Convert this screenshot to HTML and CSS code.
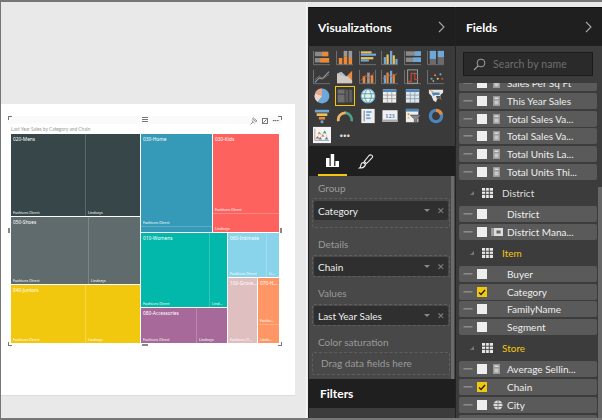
FILE: index.html
```html
<!DOCTYPE html>
<html lang="en">
<head>
<meta charset="utf-8">
<title>Power BI treemap</title>
<link rel="stylesheet" href="styles.css">
</head>
<body>
<svg class="defs" width="0" height="0">
  <defs>
    <g id="grip"><rect x="0" y="0" width="9" height="1.6" fill="#8a8a8a"/></g>
    <g id="calc"><rect x="0" y="0" width="7" height="10" fill="#9a9a9a"/><rect x="1.5" y="1.5" width="4" height="1.5" fill="#ddd"/><rect x="1.5" y="4.5" width="4" height="4" fill="#c8c8c8"/></g>
    <g id="tbl"><rect width="11" height="10" fill="#e8e8e8"/><path d="M0 3.2h11M0 6.4h11M3.6 0v10M7.3 0v10" stroke="#4a4a4a" stroke-width="1"/></g>
    <g id="frame"><path d="M.5 1v15.5H19" fill="none" stroke="#777"/></g>
  </defs>
</svg>
<main class="app">
  <section class="canvas">
    <div class="page">
      <div class="visual">
        <span class="handle tl"></span><span class="handle tr"></span><span class="handle bl"></span><span class="handle br"></span>
        <span class="mid mid-t"></span><span class="mid mid-b"></span><span class="mid mid-l"></span><span class="mid mid-r"></span>
        <div class="vis-tools">
          <svg width="8" height="8" viewBox="0 0 8 8"><path d="M.5 7.500l2.500-2.500M3.500 1l3.500 3-1.200.7-3.300-2.800zM1.800 3.500L4.500 6.200" fill="none" stroke="#777" stroke-width=".8"/></svg>
          <svg width="6" height="6" viewBox="0 0 6 6"><rect x=".5" y=".5" width="5" height="5" fill="none" stroke="#777"/><path d="M1.500 4.500l3-3" stroke="#777"/></svg>
          <span class="dots3">···</span>
        </div>
        <div class="vis-title">Last Year Sales by Category and Chain</div>
        <div class="treemap">
          <div class="tm-col col-a">
            <div class="cell men row-men">
              <b class="cat">020-Mens</b>
              <div class="leaves"><div class="leaf" style="width:74px">Fashions Direct</div><div class="leaf grow">Lindseys</div></div>
            </div>
            <div class="cell shoes row-shoes">
              <b class="cat">050-Shoes</b>
              <div class="leaves"><div class="leaf" style="width:77px">Fashions Direct</div><div class="leaf grow">Lindseys</div></div>
            </div>
            <div class="cell juniors row-juniors">
              <b class="cat">040-Juniors</b>
              <div class="leaves"><div class="leaf" style="width:74px">Fashions Direct</div><div class="leaf grow">Lindseys</div></div>
            </div>
          </div>
          <div class="tm-col col-b">
            <div class="tm-row row-top">
              <div class="cell home" style="width:71px">
                <b class="cat">030-Home</b>
                <div class="stack"><div class="leaf grow">Fashions Direct</div><div class="leaf thin"></div></div>
              </div>
              <div class="cell kids grow">
                <b class="cat">030-Kids</b>
                <div class="stack"><div class="leaf grow">Fashions Direct</div><div class="leaf kids-low">Lindseys</div></div>
              </div>
            </div>
            <div class="tm-row row-low">
              <div class="tm-col" style="width:86px">
                <div class="cell womens row-womens">
                  <b class="cat">010-Womens</b>
                  <div class="leaves"><div class="leaf" style="width:68px">Fashions Direct</div><div class="leaf grow">Lind...</div></div>
                </div>
                <div class="cell acc grow">
                  <b class="cat">080-Accessories</b>
                  <div class="leaves"><div class="leaf" style="width:55px">Fashions Direct</div><div class="leaf grow">Lindseys</div></div>
                </div>
              </div>
              <div class="tm-col grow">
                <div class="cell intimate row-intimate">
                  <b class="cat">060-Intimate</b>
                  <div class="leaves"><div class="leaf" style="width:38px">Fashions Direct</div><div class="leaf grow">Li...</div></div>
                </div>
                <div class="tm-row grow">
                  <div class="cell grocery" style="width:29px">
                    <b class="cat">100-Groce...</b>
                    <div class="stack"><div class="leaf grow">Fashions D...</div></div>
                  </div>
                  <div class="cell hosiery grow">
                    <b class="cat">070-H...</b>
                    <div class="stack"><div class="leaf grow">Fashio...</div><div class="leaf hos-low">Linds...</div></div>
                  </div>
                </div>
              </div>
            </div>
          </div>
        </div>
      </div>
    </div>
  </section>

  <aside class="panel viz">
    <header class="panel-head"><h2>Visualizations</h2><svg class="chev" width="7" height="12" viewBox="0 0 7 12"><path d="M1 1l5 5-5 5" fill="none" stroke="#a8a8a8" stroke-width="1.1"/></svg></header>
    <div class="gallery">
      <svg viewBox="0 0 20 18"><use href="#frame"/><rect x="2" y="2" width="15" height="5" fill="#8a8a8a"/><rect x="2" y="9" width="16" height="5" fill="#8a8a8a"/><rect x="10" y="2" width="7" height="5" fill="#e98a3a"/><rect x="8" y="9" width="10" height="5" fill="#e98a3a"/></svg>
      <svg viewBox="0 0 20 18"><use href="#frame"/><rect x="3" y="9" width="4" height="7" fill="#e98a3a"/><rect x="8.500" y="1" width="4" height="6" fill="#999"/><rect x="8.500" y="7" width="4" height="9" fill="#e98a3a"/><rect x="14" y="1" width="4" height="8" fill="#999"/><rect x="14" y="9" width="4" height="7" fill="#e98a3a"/></svg>
      <svg viewBox="0 0 20 18"><use href="#frame"/><rect x="2" y="1.500" width="12" height="2.500" fill="#ecc15a"/><rect x="2" y="4" width="17" height="2.500" fill="#6ea8d8"/><rect x="2" y="8" width="14" height="2.500" fill="#ecc15a"/><rect x="2" y="10.500" width="9" height="2.500" fill="#6ea8d8"/></svg>
      <svg viewBox="0 0 20 18"><use href="#frame"/><rect x="3" y="8" width="2.500" height="8" fill="#6ea8d8"/><rect x="6" y="5" width="2.500" height="11" fill="#ecc15a"/><rect x="10" y="1" width="2.500" height="15" fill="#6ea8d8"/><rect x="13" y="6" width="2.500" height="10" fill="#ecc15a"/><rect x="16" y="10" width="2.500" height="6" fill="#6ea8d8"/></svg>
      <svg viewBox="0 0 20 18"><use href="#frame"/><rect x="2" y="1.500" width="17" height="5" fill="#8a8a8a"/><rect x="12" y="1.500" width="7" height="5" fill="#6ea8d8"/><rect x="2" y="8.500" width="17" height="5" fill="#8a8a8a"/><rect x="10" y="8.500" width="9" height="5" fill="#6ea8d8"/></svg>
      <svg viewBox="0 0 20 18"><use href="#frame"/><rect x="3" y="1" width="7" height="15" fill="#6b6b6b"/><rect x="3" y="1" width="7" height="9" fill="#6ea8d8"/><rect x="12" y="1" width="7" height="15" fill="#6b6b6b"/><rect x="12" y="1" width="7" height="7" fill="#6ea8d8"/></svg>

      <svg viewBox="0 0 20 18"><use href="#frame"/><path d="M2 15l5-5 3 1 8-8" fill="none" stroke="#6ea8d8" stroke-width="1.200"/><path d="M2 12l5-4 4 3 7-5" fill="none" stroke="#b06a3a" stroke-width="1"/></svg>
      <svg viewBox="0 0 20 18"><path d="M1 6l5 1 5 2 7-7v14H1z" fill="#e98a3a"/><path d="M1 5l5-2 5 5 3 1 4 4v3H1z" fill="#c9d3da" opacity=".85"/></svg>
      <svg viewBox="0 0 20 18"><use href="#frame"/><path d="M18.500 1v15" stroke="#777"/><rect x="4" y="8" width="3" height="8" fill="#e98a3a"/><rect x="9" y="4" width="3" height="12" fill="#999"/><rect x="13" y="7" width="3" height="9" fill="#e98a3a"/><path d="M2 13l5-6 4 3 6-6" fill="none" stroke="#c9563a"/></svg>
      <svg viewBox="0 0 20 18"><use href="#frame"/><rect x="3" y="7" width="2.500" height="9" fill="#6ea8d8"/><rect x="6" y="4" width="2.500" height="12" fill="#e98a3a"/><rect x="10" y="2" width="2.500" height="14" fill="#6ea8d8"/><rect x="13" y="6" width="2.500" height="10" fill="#e98a3a"/><path d="M2 11l6-4 5 2 5-4" fill="none" stroke="#d9603a"/></svg>
      <svg viewBox="0 0 20 18"><use href="#frame"/><rect x="4" y="1" width="11" height="15" fill="none" stroke="#aaa"/><path d="M4 14h4V5h4v7h4" fill="none" stroke="#c9432f" stroke-width="1.400"/><path d="M12 5h3" stroke="#3d9a7a"/></svg>
      <svg viewBox="0 0 20 18"><use href="#frame"/><g><circle cx="5" cy="11" r="1.200" fill="#6ea8d8"/><circle cx="9" cy="7" r="1.200" fill="#e98a3a"/><circle cx="12" cy="11" r="1.200" fill="#ecc15a"/><circle cx="15" cy="6" r="1.200" fill="#6ea8d8"/><circle cx="17" cy="11" r="1.200" fill="#c9563a"/><circle cx="7" cy="13.500" r="1" fill="#aaa"/></g></svg>

      <svg viewBox="0 0 20 18"><circle cx="10" cy="9" r="8.300" fill="#6ea8d8"/><path d="M10 9V.7A8.300 8.300 0 0 0 2.200 6.200z" fill="#e9a48a"/><path d="M10 9L2.200 6.200A8.300 8.300 0 0 0 5 15.600z" fill="#f0d5c6"/></svg>
      <svg class="selected" viewBox="0 0 20 18"><rect x="2" y="2" width="16" height="14" fill="#5e5e5e"/><rect x="2" y="2" width="8" height="14" fill="#6e6e6e"/><path d="M2 7h8M10 2v14M14 2v14" stroke="#3c3c3c"/></svg>
      <svg viewBox="0 0 20 18"><circle cx="10" cy="9" r="7.800" fill="#e8eef2" stroke="#6ea8d8" stroke-width="1.200"/><path d="M2.500 6.500h15M2.500 11.500h15M10 1c-5 4-5 12 0 16M10 1c5 4 5 12 0 16" fill="none" stroke="#3f9a8a" stroke-width=".9"/></svg>
      <svg viewBox="0 0 20 18"><rect x="2" y="1.500" width="15" height="15" fill="#eee"/><rect x="2" y="1.500" width="15" height="3" fill="#4b84b8"/><path d="M2 8h15M2 12h15M7 4v13M12 4v13" stroke="#999" stroke-width=".9"/></svg>
      <svg viewBox="0 0 20 18"><rect x="2" y="1.500" width="15" height="15" fill="#dfe6ec"/><rect x="2" y="1.500" width="15" height="3" fill="#4b84b8"/><path d="M2 8h15M2 12h15M7 4v13M12 4v13" stroke="#8a9aa8" stroke-width=".9"/></svg>
      <svg viewBox="0 0 20 18"><path d="M2 2h16v3l-3 3v3l-4 2-1 3-3-2-2-5-3-3z" fill="#e8e8e8"/><path d="M5 5h9v3H9L7 9z" fill="#4b84b8"/><path d="M10 9h5v3h-4z" fill="#555"/><path d="M3 3l4 1M14 11l2 2" stroke="#e98a3a"/></svg>

      <svg viewBox="0 0 20 18"><rect x="2" y="2" width="16" height="3" fill="#6ea8d8"/><rect x="4" y="6" width="12" height="3" fill="#ecc15a"/><rect x="6.500" y="10" width="7" height="3" fill="#e98a3a"/><rect x="8.500" y="14" width="3" height="3" fill="#6ea8d8"/></svg>
      <svg viewBox="0 0 20 18"><path d="M2.500 15A8 8 0 0 1 11 5.500" fill="none" stroke="#e9b46a" stroke-width="3"/><path d="M11 5.500A8 8 0 0 1 17.500 15" fill="none" stroke="#4f9f8c" stroke-width="3"/></svg>
      <svg viewBox="0 0 20 18"><rect x="2.500" y="1" width="15" height="16" fill="#efefef"/><rect x="5" y="3" width="1.500" height="12" fill="#999"/><rect x="8" y="3.500" width="6" height="2" fill="#6ea8d8"/><rect x="8" y="7" width="4" height="2" fill="#6ea8d8"/><rect x="8" y="10.500" width="5" height="2" fill="#6ea8d8"/></svg>
      <svg viewBox="0 0 20 18"><rect x="1.500" y="2.500" width="17" height="13" fill="#f0f0f0"/><rect x="1.500" y="13" width="17" height="2.500" fill="#aaa"/><text x="10" y="11.200" text-anchor="middle" class="num">123</text></svg>
      <svg viewBox="0 0 20 18"><rect x="2" y="1" width="14" height="15" fill="#efefef"/><rect x="2" y="1" width="14" height="3" fill="#4b84b8"/><rect x="4" y="6" width="2" height="2" fill="#e98a3a"/><rect x="4" y="10" width="2" height="2" fill="#ecc15a"/><path d="M7 8h12l-4.500 4.500V17l-3-1.500v-3z" fill="#888" stroke="#3c3c3c" stroke-width=".7"/></svg>
      <svg viewBox="0 0 20 18"><circle cx="10" cy="9" r="6.300" fill="none" stroke="#4b84b8" stroke-width="3.800"/><path d="M10 2.700A6.300 6.300 0 0 1 16 7.500" fill="none" stroke="#e98a3a" stroke-width="3.800"/></svg>

      <svg class="decomp" viewBox="0 0 20 18"><rect x="0" y="0" width="20" height="18" fill="#f4f4f4"/><path d="M2 2v13h16" fill="none" stroke="#888" stroke-width=".8"/><path d="M4 13l3-5 3 1 3-4 3 7" fill="none" stroke="#bbb" stroke-width=".6"/><path d="M5 8l2-3 2 3zM9 11l2-3 2 3z" fill="#e98a3a"/><path d="M3 13l2-2.500 2 2.500z" fill="#c9432f"/><path d="M6 14l2-3 2 3zM13 14l2-3 2 3z" fill="#4b84b8"/><path d="M11 7l2-3 2 3z" fill="#3f9a8a"/></svg>
      <span class="more">···</span>
    </div>
    <div class="tabs">
      <span class="tab active"><svg width="13" height="13" viewBox="0 0 13 13"><path d="M0 4h3.500v9H0zM4.700 0h3.500v13H4.700zM9.400 7H13v6H9.400zM0 12h13v1H0z" fill="#fff"/></svg></span>
      <span class="tab"><svg width="16" height="15" viewBox="0 0 16 15"><path d="M11 1.500c1-1 3.200-.6 3.500.4.400 1-.3 2-1.200 2.800L8.500 9.600 6.300 7.500zM5.500 8.500l2 2c-.5 2-2.500 3.500-6 3.500 1.500-1 1-2.300 1.500-3.500.4-1.200 1.500-2 2.500-2z" fill="none" stroke="#eee" stroke-width="1.100"/></svg></span>
    </div>
    <div class="wells">
      <div class="well-label">Group</div>
      <div class="well tall"><div class="pill"><span>Category</span><i class="caret"></i><i class="x">✕</i></div></div>
      <div class="well-label">Details</div>
      <div class="well"><div class="pill"><span>Chain</span><i class="caret"></i><i class="x">✕</i></div></div>
      <div class="well-label">Values</div>
      <div class="well"><div class="pill"><span>Last Year Sales</span><i class="caret"></i><i class="x">✕</i></div></div>
      <div class="well-label">Color saturation</div>
      <div class="well empty">Drag data fields here</div>
      <span class="vscroll"></span>
    </div>
    <header class="filters"><h2>Filters</h2></header>
    <div class="filters-body"></div>
  </aside>

  <aside class="panel fields">
    <header class="panel-head"><h2>Fields</h2><svg class="chev" width="7" height="12" viewBox="0 0 7 12"><path d="M1 1l5 5-5 5" fill="none" stroke="#a8a8a8" stroke-width="1.100"/></svg></header>
    <div class="search-wrap"><div class="search">
      <svg width="13" height="13" viewBox="0 0 13 13"><circle cx="8" cy="5" r="3.900" fill="none" stroke="#a0a0a0"/><path d="M5 8l-4 4" stroke="#a0a0a0" stroke-width="1.100"/></svg>
      <span>Search by name</span></div></div>
    <div class="list">
      <div class="list-inner">
        <div class="frow"><svg class="g" viewBox="0 0 9 2"><use href="#grip"/></svg><i class="cb"></i><svg class="fi" viewBox="0 0 7 10"><use href="#calc"/></svg><span>Sales Per Sq Ft</span></div>
        <div class="frow"><svg class="g" viewBox="0 0 9 2"><use href="#grip"/></svg><i class="cb"></i><svg class="fi" viewBox="0 0 7 10"><use href="#calc"/></svg><span>This Year Sales</span></div>
        <div class="frow"><svg class="g" viewBox="0 0 9 2"><use href="#grip"/></svg><i class="cb"></i><svg class="fi" viewBox="0 0 7 10"><use href="#calc"/></svg><span>Total Sales Va...</span></div>
        <div class="frow"><svg class="g" viewBox="0 0 9 2"><use href="#grip"/></svg><i class="cb"></i><svg class="fi" viewBox="0 0 7 10"><use href="#calc"/></svg><span>Total Sales Va...</span></div>
        <div class="frow"><svg class="g" viewBox="0 0 9 2"><use href="#grip"/></svg><i class="cb"></i><svg class="fi" viewBox="0 0 7 10"><use href="#calc"/></svg><span>Total Units La...</span></div>
        <div class="frow"><svg class="g" viewBox="0 0 9 2"><use href="#grip"/></svg><i class="cb"></i><svg class="fi" viewBox="0 0 7 10"><use href="#calc"/></svg><span>Total Units Thi...</span></div>
        <div class="fgroup"><i class="tri"></i><svg class="ti" viewBox="0 0 11 10"><use href="#tbl"/></svg><span>District</span></div>
        <div class="frow"><svg class="g" viewBox="0 0 9 2"><use href="#grip"/></svg><i class="cb"></i><i class="fi"></i><span>District</span></div>
        <div class="frow"><svg class="g" viewBox="0 0 9 2"><use href="#grip"/></svg><i class="cb"></i><svg class="fi wide" viewBox="0 0 12 8"><rect width="4" height="8" fill="#999"/><rect x="3" y="0" width="9" height="8" fill="#ddd"/><rect x="5.500" y="2.500" width="4" height="3" fill="#666"/></svg><span>District Mana...</span></div>
        <div class="fgroup on"><i class="tri"></i><svg class="ti" viewBox="0 0 11 10"><use href="#tbl"/></svg><span>Item</span></div>
        <div class="frow"><svg class="g" viewBox="0 0 9 2"><use href="#grip"/></svg><i class="cb"></i><i class="fi"></i><span>Buyer</span></div>
        <div class="frow"><svg class="g" viewBox="0 0 9 2"><use href="#grip"/></svg><i class="cb on"><svg viewBox="0 0 10 10"><path d="M2 5.500l2 2 4-4.500" fill="none" stroke="#222" stroke-width="1.400"/></svg></i><i class="fi"></i><span>Category</span></div>
        <div class="frow"><svg class="g" viewBox="0 0 9 2"><use href="#grip"/></svg><i class="cb"></i><i class="fi"></i><span>FamilyName</span></div>
        <div class="frow"><svg class="g" viewBox="0 0 9 2"><use href="#grip"/></svg><i class="cb"></i><i class="fi"></i><span>Segment</span></div>
        <div class="fgroup on"><i class="tri"></i><svg class="ti" viewBox="0 0 11 10"><use href="#tbl"/></svg><span>Store</span></div>
        <div class="frow"><svg class="g" viewBox="0 0 9 2"><use href="#grip"/></svg><i class="cb"></i><svg class="fi" viewBox="0 0 7 10"><use href="#calc"/></svg><span>Average Sellin...</span></div>
        <div class="frow"><svg class="g" viewBox="0 0 9 2"><use href="#grip"/></svg><i class="cb on"><svg viewBox="0 0 10 10"><path d="M2 5.500l2 2 4-4.500" fill="none" stroke="#222" stroke-width="1.400"/></svg></i><i class="fi"></i><span>Chain</span></div>
        <div class="frow"><svg class="g" viewBox="0 0 9 2"><use href="#grip"/></svg><i class="cb"></i><svg class="fi globe" viewBox="0 0 10 10"><circle cx="5" cy="5" r="4.500" fill="#ddd"/><path d="M0 3.500h10M0 6.500h10M5 0v10" stroke="#666" stroke-width=".8"/></svg><span>City</span></div>
        <div class="frow"><svg class="g" viewBox="0 0 9 2"><use href="#grip"/></svg><i class="cb"></i><svg class="fi" viewBox="0 0 7 10"><use href="#calc"/></svg></div>
      </div>
      <span class="list-scroll"></span>
    </div>
  </aside>
</main>
</body>
</html>
```
FILE: styles.css
```css
* { box-sizing: border-box; }
html, body { margin: 0; padding: 0; }
body { width: 602px; height: 420px; overflow: hidden; background: #e9e9e9; font-family: "Lato", "Open Sans", sans-serif; }
.defs { position: absolute; }
h2 { margin: 0; font: inherit; }
i { font-style: normal; }
.grow { flex: 1 1 0; min-width: 0; min-height: 0; }

.app { display: flex; width: 602px; height: 420px; border-top: 2px solid #777; border-bottom: 2px solid #777; }

/* canvas */
.canvas { width: 307px; height: 416px; flex: none; background: #e9e9e9; padding: 102px 0 0 0; border-left: 1px solid #777; border-right: 1px solid #f6f6f6; }
.page { width: 294px; height: 291px; background: #fff; padding: 12px 0 0 7px; box-shadow: 0 1px 0 #ddd; }
.visual { position: relative; width: 274px; height: 230px; padding: 0 3px 3px 3px; background: #fff; }
.vis-tools { box-sizing: content-box; height: 5px; margin: 0 -3px; padding: 2px 3px 1px; display: flex; justify-content: flex-end; align-items: center; gap: 4px; background: #fafafa; }
.dots3 { font-size: 8px; line-height: 5px; color: #666; font-weight: 700; }
.vis-title { font-size: 4.800px; line-height: 10px; color: #999; height: 10px; white-space: nowrap; }
.treemap { display: flex; gap: 1px; width: 268px; height: 209px; }
.handle { position: absolute; width: 4px; height: 4px; border: 0 solid #777; }
.tl { left: 0; top: 0; border-width: 1.500px 0 0 1.500px; }
.tr { right: 0; top: 0; border-width: 1.500px 1.500px 0 0; }
.bl { left: 0; bottom: 0; border-width: 0 0 1.500px 1.500px; }
.br { right: 0; bottom: 0; border-width: 0 1.500px 1.500px 0; }
.mid { position: absolute; background: #888; }
.mid-t { left: 134px; top: 1px; width: 6px; height: 5px; background: repeating-linear-gradient(#777 0 1px, #fff 1px 2px); }
.mid-b { left: 134px; bottom: 0; width: 6px; height: 2px; }
.mid-l { left: 0; top: 112px; width: 2px; height: 5px; }
.mid-r { right: 0; top: 112px; width: 2px; height: 5px; }

.tm-col { display: flex; flex-direction: column; gap: 1px; }
.tm-row { display: flex; gap: 1px; }
.col-a { width: 129px; flex: none; }
.col-b { width: 138px; flex: none; }
.row-men { height: 82px; }
.row-shoes { height: 67px; }
.row-juniors { flex: 1; }
.row-top { height: 98px; flex: none; }
.row-low { flex: 1; min-height: 0; }
.row-womens { height: 74px; flex: none; }
.row-intimate { height: 44px; flex: none; }

.cell { position: relative; display: flex; color: #fff; font-family: "Noto Sans", sans-serif; font-size: 4.800px; line-height: 6px; overflow: hidden; white-space: nowrap; }
.cat { position: absolute; left: 2px; top: 1.500px; font-weight: 400; z-index: 1; }
.leaves, .stack { display: flex; flex: 1; gap: 1px; min-width: 0; }
.stack { flex-direction: column; }
.leaf { display: flex; align-items: flex-end; padding: 0 0 0 2px; overflow: hidden; flex: none; font-size: 3.700px; }
.thin { height: 5px; }
.kids-low { height: 18px; }
.hos-low { height: 18px; }
.leaves > .grow, .stack > .grow { flex: 1 1 0; }

.men { background: #374649; } .men .leaves { background: #5b6669; }
.men .leaf { background: #374649; }
.shoes { background: #5f6b6d; } .shoes .leaves { background: #7c8688; }
.shoes .leaf { background: #5f6b6d; }
.juniors { background: #f2c80f; } .juniors .leaves { background: #f5d84d; }
.juniors .leaf { background: #f2c80f; }
.home { background: #3599b8; } .home .stack { background: #5dadc6; }
.home .leaf { background: #3599b8; }
.kids { background: #fd625e; } .kids .stack { background: #fd8783; }
.kids .leaf { background: #fd625e; }
.womens { background: #01b8aa; } .womens .leaves { background: #33c6bb; }
.womens .leaf { background: #01b8aa; }
.acc { background: #a66999; } .acc .leaves { background: #b887ad; }
.acc .leaf { background: #a66999; }
.intimate { background: #8ad4eb; } .intimate .leaves { background: #a1ddef; }
.intimate .leaf { background: #8ad4eb; }
.grocery { background: #dfbfbf; }
.hosiery { background: #fe9666; } .hosiery .stack { background: #fead88; }
.hosiery .leaf { background: #fe9666; }

/* panels */
.panel { display: flex; flex-direction: column; height: 411px; margin-top: 5px; flex: none; width: 147px; background: #3c3c3c; color: #fff; border-left: 1px solid #222; }
.viz { margin-left: 1px; width: 147px; }
.fields { width: 147px; overflow: hidden; }
.panel-head { height: 39px; flex: none; background: #1f1f1f; border-top: 1px solid #111; display: flex; align-items: center; justify-content: space-between; padding: 0 10px 0 9px; font-size: 12px; font-weight: 700; }
.fields .panel-head { padding-left: 10px; }

.gallery { display: grid; grid-template-columns: repeat(6, 18px); grid-auto-rows: 19.400px; column-gap: 4.800px; padding: 2px 0 0 4px; height: 100px; flex: none; align-items: center; background: #3a3a3a; }
.gallery svg { width: 18px; height: 16px; display: block; }
.gallery svg.selected { outline: 1px solid #f2c80f; height: 18px; }
.gallery svg.decomp { height: 18px; }
.more { font-size: 13px; font-weight: 700; color: #ddd; line-height: 12px; text-align: center; }
.num { font: 700 7px "Liberation Serif", serif; fill: #4b84b8; }

.tabs { height: 30px; flex: none; background: #1f1f1f; display: flex; padding-left: 9px; }
.tab { width: 29px; display: flex; align-items: center; justify-content: center; margin-right: 4px; padding-top: 1px; }
.tab.active { border-bottom: 2px solid #f2c80f; }

.wells { position: relative; height: 203px; flex: none; background: #484848; padding: 3px 5px 0 3px; font-size: 10px; }
.vscroll { position: absolute; top: 0; right: 1px; width: 3px; height: 100%; background: #6b6b6b; }
.well-label { height: 18px; line-height: 18px; padding-left: 6px; margin-bottom: 2px; color: #9a9a9a; }
.well { border: 1px dashed #5e5e5e; border-radius: 2px; padding: 1px; height: 22px; margin-bottom: 7px; }
.well.tall { height: 30px; margin-top: -1px; padding-top: 2px; }
.pill { display: flex; align-items: center; height: 19px; background: #2f2f2f; border-radius: 2px; padding: 0 3px 0 4px; color: #eee; }
.pill span { flex: 1; }
.caret { width: 0; height: 0; border: 3px solid transparent; border-top: 3.500px solid #888; border-bottom: 0; margin-right: 7px; }
.x { font-size: 9px; color: #888; line-height: 10px; }
.well.empty { color: #9a9a9a; height: 23px; margin-top: -1px; line-height: 21px; padding: 0 0 0 8px; margin-bottom: 0; }

.filters { height: 29px; flex: none; background: #1f1f1f; display: flex; align-items: center; padding-left: 11px; font-size: 12px; font-weight: 700; }
.filters-body { flex: 1; background: #3c3c3c; }

.search-wrap { height: 37px; flex: none; padding: 6px 9px 0 7px; }
.search { display: flex; align-items: center; gap: 7px; height: 24px; padding-left: 9px; background: #2a2a2a; border: 1px solid #1a1a1a; color: #6f6f6f; font-size: 10.500px; letter-spacing: .1px; }
.list { position: relative; flex: 1; overflow: hidden; }
.list-inner { margin-top: -8px; padding: 0 5px 0 3px; }
.frow { display: flex; align-items: center; height: 16px; margin-bottom: 1.800px; background: #5a5a5a; border-radius: 2px; font-size: 10px; color: #eee; white-space: nowrap; }
.g { width: 10px; height: 2px; margin-left: 4px; flex: none; }
.cb { width: 10px; height: 10px; margin-left: 4px; background: #eee; flex: none; display: block; }
.cb svg { display: block; width: 10px; height: 10px; }
.cb.on { background: #f2c80f; }
.fi { width: 7px; height: 10px; margin: 0 7px 0 6px; flex: none; display: block; }
.fi.wide { width: 12px; height: 8px; margin: 0 4px 0 4px; }
.fi.globe { width: 10px; height: 10px; margin: 0 4px 0 6px; }
.fgroup { display: flex; align-items: center; height: 26px; margin-top: -1.800px; font-size: 10px; color: #ddd; padding-left: 11px; }
.fgroup.on { color: #f2c80f; }
.tri { width: 0; height: 0; border-left: 4px solid transparent; border-bottom: 4px solid #777; flex: none; }
.ti { width: 11px; height: 10px; margin: 0 9px 0 8px; flex: none; }
.list-scroll { position: absolute; right: 0; top: 104px; width: 4px; height: 100%; background: #666; }
```
